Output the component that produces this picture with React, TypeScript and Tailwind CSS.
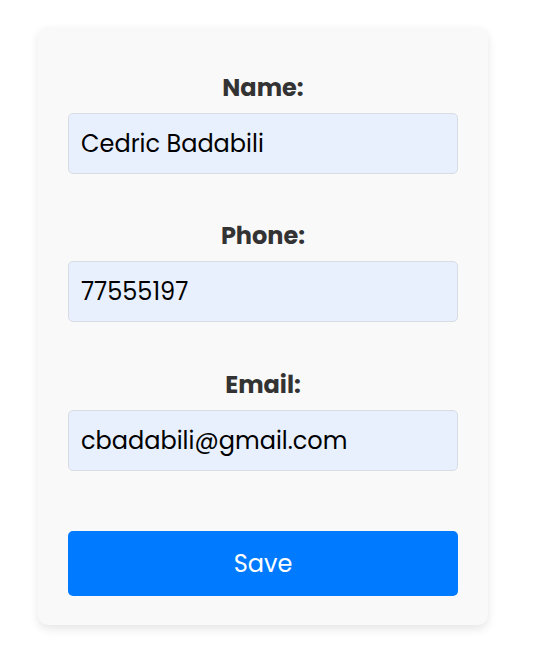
import React, { useState } from 'react';

const font = { fontFamily: 'Poppins, Inter, "Noto Sans", sans-serif' };

const Field: React.FC<{ label: string; value: string; onChange: (v: string) => void; gap?: string }> = ({
  label,
  value,
  onChange,
  gap = '',
}) => (
  <div className={gap}>
    <label className="flex h-[36px] items-center justify-center text-[24px] font-bold text-[#333]">{label}</label>
    <input
      value={value}
      onChange={e => onChange(e.target.value)}
      className="mt-[7px] block h-[61px] w-full rounded-[5px] border border-[#d8dde5] bg-[#e8f0fe] px-[12px] text-[24px] text-black outline-none"
    />
  </div>
);

export default function App() {
  const [form, setForm] = useState({
    name: 'Cedric Badabili',
    phone: '77555197',
    email: 'cbadabili@gmail.com',
  });

  return (
    <div className="min-h-screen bg-white pt-[27px] pl-[38px]" style={font}>
      <form
        onSubmit={e => e.preventDefault()}
        className="w-[450px] rounded-[10px] bg-[#f9f9f9] px-[30px] pt-[43px] pb-[29px] shadow-[0_4px_10px_rgba(0,0,0,0.1)]"
      >
        <Field label="Name:" value={form.name} onChange={v => setForm({ ...form, name: v })} />
        <Field gap="mt-[44px]" label="Phone:" value={form.phone} onChange={v => setForm({ ...form, phone: v })} />
        <Field gap="mt-[45px]" label="Email:" value={form.email} onChange={v => setForm({ ...form, email: v })} />
        <button
          type="submit"
          className="mt-[60px] block h-[65px] w-full rounded-[5px] bg-[#007bff] text-[24px] text-white"
        >
          Save
        </button>
      </form>
    </div>
  );
}
